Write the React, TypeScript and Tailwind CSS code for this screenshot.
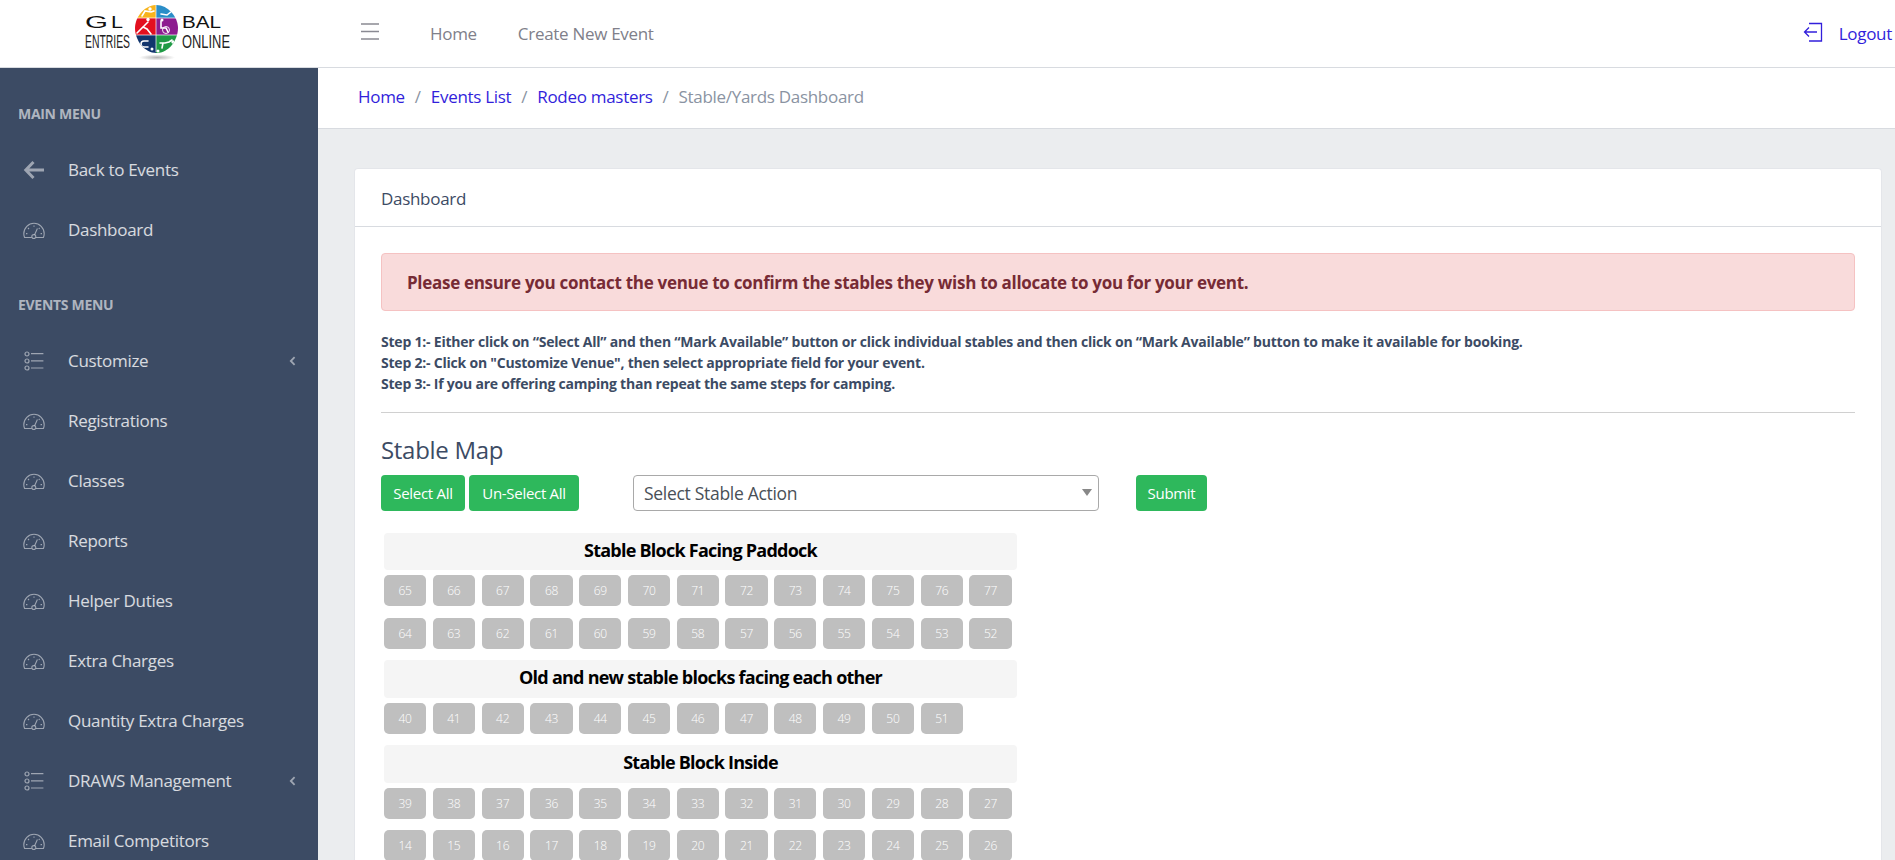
import React from "react";

const Gauge = () => (
  <svg width="22" height="17" viewBox="0 0 22 17" fill="none" stroke="currentColor" strokeWidth="1.1" className="shrink-0">
    <path d="M8.6 15.5H1.6C1 14 .8 13 .8 11.8 .8 6 5.4 1.2 11 1.2S21.2 6 21.2 11.8c0 1.2-.2 2.2-.8 3.7H13" />
    <circle cx="10.8" cy="14.6" r="2" />
    <path d="M11.6 12.8 14.4 6.6M11 3.4V4.8M5 6l1 1M3 11.6h1.4M17.6 11.6H19M16.6 6l-.8.8" />
  </svg>
);
const ListIcon = () => (
  <svg width="20" height="20" viewBox="0 0 20 20" fill="none" stroke="currentColor" strokeWidth="1.2" className="shrink-0">
    <circle cx="3" cy="3" r="2" />
    <circle cx="3" cy="10" r="2" />
    <circle cx="3" cy="17" r="2" />
    <path d="M7 2.6H19.4M7 9.8H19.4M7 17H19.4" />
  </svg>
);
const BackArrow = () => (
  <svg width="22" height="20" viewBox="0 0 22 20" fill="none" stroke="currentColor" strokeWidth="3" className="shrink-0">
    <path d="M21 10H3M10.5 2 2.8 10l7.7 8" />
  </svg>
);
const Chevron = () => (
  <svg width="7" height="10" viewBox="0 0 7 10" fill="none" stroke="currentColor" strokeWidth="1.8">
    <path d="M5.6 1.2 1.8 5l3.8 3.8" />
  </svg>
);

const Logo = () => (
  <svg width="155" height="67" viewBox="0 0 155 67" className="ml-[80px] shrink-0" style={{ fontFamily: '"Liberation Sans", sans-serif', letterSpacing: 0 }}>
    <defs>
      <clipPath id="globe">
        <path d="M49.5 5C38 6 29 17 29 28c0 12 9 25 21.5 25S72 40 72 28C72 17 62 4.500 49.500 5Z" />
      </clipPath>
      <radialGradient id="shadow">
        <stop offset="0" stopColor="#b5b5b5" />
        <stop offset="1" stopColor="#ffffff" />
      </radialGradient>
    </defs>
    <g transform="translate(26 0)">
      <ellipse cx="51" cy="57.500" rx="18" ry="3" fill="url(#shadow)" />
      <g clipPath="url(#globe)">
        <rect x="25" y="0" width="25" height="18" fill="#f7b41d" />
        <rect x="50" y="0" width="26" height="18" fill="#2b8ec8" />
        <rect x="25" y="18" width="25" height="17" fill="#e30f1f" />
        <rect x="50" y="18" width="26" height="17" fill="#8d1c8f" />
        <rect x="25" y="35" width="25" height="20" fill="#11356d" />
        <rect x="50" y="35" width="26" height="20" fill="#1f9a45" />
        <g fill="none" stroke="#fff" strokeWidth="1.6" strokeLinecap="round">
          <path d="M36 16l3-5 6 1 3-1" />
          <path d="M55 14l6 1 5-4" />
          <path d="M31 33l6-6 4 2 4 5M38 26l4-4" />
          <path d="M55 21v7h5l2 4" />
          <path d="M42 41h-4a3 3 0 0 0 0 6h4" />
          <path d="M54 43h5l4-1 3-2M57 43l-1 5" />
        </g>
        <g fill="#fff">
          <circle cx="44" cy="9" r="1.700" />
          <circle cx="66" cy="8" r="1.700" />
          <circle cx="42" cy="19.500" r="1.700" />
          <circle cx="56" cy="20" r="1.500" />
          <circle cx="67" cy="42" r="1.700" />
          <circle cx="46" cy="49" r="1.500" />
          <circle cx="52" cy="51" r="1.500" />
        </g>
        <circle cx="60" cy="30" r="3.500" fill="none" stroke="#fff" strokeWidth="0.9" />
      </g>
      <path d="M50 5v47M29 18h43M29 35h43" stroke="#fff" strokeWidth="0.7" />
    </g>
    <text x="5" y="28" fontSize="17" fill="#111" textLength="23" lengthAdjust="spacingAndGlyphs">G</text>
    <text x="31" y="28" fontSize="17" fill="#111" textLength="12" lengthAdjust="spacingAndGlyphs">L</text>
    <text x="5" y="48" fontSize="18" fill="#222" textLength="45" lengthAdjust="spacingAndGlyphs">ENTRIES</text>
    <text x="102" y="28" fontSize="17" fill="#111" textLength="39" lengthAdjust="spacingAndGlyphs">BAL</text>
    <text x="102" y="48" fontSize="18" fill="#222" textLength="48" lengthAdjust="spacingAndGlyphs">ONLINE</text>
  </svg>
);

const items: { label: string; icon: "gauge" | "list"; sub?: boolean }[] = [
  { label: "Customize", icon: "list", sub: true },
  { label: "Registrations", icon: "gauge" },
  { label: "Classes", icon: "gauge" },
  { label: "Reports", icon: "gauge" },
  { label: "Helper Duties", icon: "gauge" },
  { label: "Extra Charges", icon: "gauge" },
  { label: "Quantity Extra Charges", icon: "gauge" },
  { label: "DRAWS Management", icon: "list", sub: true },
  { label: "Email Competitors", icon: "gauge" },
];

const NavRow = ({ icon, label, sub }: { icon: React.ReactNode; label: string; sub?: boolean }) => (
  <div className="flex h-[60px] shrink-0 items-center">
    <div className="flex w-[68px] justify-center pl-[1px] pr-[2px] text-white/50">{icon}</div>
    <span className="text-white/80">{label}</span>
    {sub && (
      <span className="ml-auto mr-[22px] text-white/50">
        <Chevron />
      </span>
    )}
  </div>
);

const SectionTitle = ({ children, className }: { children: React.ReactNode; className: string }) => (
  <div className={`flex shrink-0 items-center pl-[18px] text-[14px] font-bold text-white/60 ${className}`}>{children}</div>
);

const Seat = ({ n }: { n: number }) => (
  <div className="flex h-[31px] w-[42.2px] items-center justify-center rounded-[5px] bg-[#bfbfbf] text-[12px] font-light text-white">{n}</div>
);

const SeatRow = ({ nums }: { nums: number[] }) => (
  <div className="flex gap-[6.6px]">
    {nums.map((n) => (
      <Seat key={n} n={n} />
    ))}
  </div>
);

const range = (a: number, b: number) => {
  const out: number[] = [];
  if (a <= b) for (let i = a; i <= b; i++) out.push(i);
  else for (let i = a; i >= b; i--) out.push(i);
  return out;
};

const BlockTitle = ({ children, className }: { children: React.ReactNode; className: string }) => (
  <div className={`flex w-[633px] items-center justify-center rounded-[4px] bg-[#f5f5f5] pb-[3px] text-[18px] font-bold tracking-[-0.75px] text-black ${className}`}>
    {children}
  </div>
);

const GreenBtn = ({ children, className }: { children: React.ReactNode; className: string }) => (
  <button className={`flex h-[36px] items-center justify-center rounded-[4px] bg-[#2eb85c] text-[15px] text-white ${className}`}>{children}</button>
);

export default function App() {
  return (
    <div className="flex h-screen flex-col overflow-hidden bg-[#ebedef] text-[17px] text-[#3c4b64]" style={{ fontFamily: '"Open Sans", "Noto Sans", sans-serif', letterSpacing: "-0.3px" }}>
      <header className="flex h-[68px] shrink-0 items-center border-b border-[#d8dbe0] bg-white">
        <div className="flex w-[318px] shrink-0">
          <Logo />
        </div>
        <svg width="20" height="18" viewBox="0 0 20 18" className="mb-[4px] ml-[42px] text-[#8a8a93]" stroke="currentColor" strokeWidth="1.4">
          <path d="M1 1h18M1 8.500h18M1 16h18" />
        </svg>
        <nav className="ml-[50px] flex gap-[41px] text-[#80808a]">
          <span>Home</span>
          <span>Create New Event</span>
        </nav>
        <div className="ml-auto flex items-center pr-[3px] text-[#321fdb]">
          <svg width="20" height="20" viewBox="0 0 20 20" fill="none" stroke="currentColor" strokeWidth="1.3" className="mb-[4px]">
            <path d="M6 1.500H18.500V19H6M14 10H1.500M6 5.500 1.500 10 6 14.500" />
          </svg>
          <span className="ml-[16px]">Logout</span>
        </div>
      </header>
      <div className="flex min-h-0 flex-1">
        <aside className="flex w-[318px] shrink-0 flex-col overflow-hidden bg-[#3c4b64]">
          <SectionTitle className="h-[72px] pt-[18px]">MAIN MENU</SectionTitle>
          <NavRow icon={<BackArrow />} label="Back to Events" />
          <NavRow icon={<Gauge />} label="Dashboard" />
          <SectionTitle className="h-[71px] pt-[18px]">EVENTS MENU</SectionTitle>
          {items.map((it) => (
            <NavRow key={it.label} icon={it.icon === "gauge" ? <Gauge /> : <ListIcon />} label={it.label} sub={it.sub} />
          ))}
        </aside>
        <main className="flex min-w-0 flex-1 flex-col">
          <div className="flex h-[61px] shrink-0 items-center gap-[10px] border-b border-[#d8dbe0] bg-white pl-[40px] pb-[2px]">
            <span className="text-[#321fdb]">Home</span>
            <span className="text-[#8a93a2]">/</span>
            <span className="text-[#321fdb]">Events List</span>
            <span className="text-[#8a93a2]">/</span>
            <span className="text-[#321fdb]">Rodeo masters</span>
            <span className="text-[#8a93a2]">/</span>
            <span className="text-[#8a93a2]">Stable/Yards Dashboard</span>
          </div>
          <div className="ml-[36px] mr-[13px] mt-[39px] flex flex-1 flex-col rounded-t-[4px] border-x border-t border-[#e4e6ea] bg-white">
            <div className="flex h-[58px] shrink-0 items-center border-b border-[#d8dbe0] pl-[26px] pt-[2px]">Dashboard</div>
            <div className="px-[26px] pt-[26px]">
              <div className="flex h-[58px] items-center rounded-[4px] border border-[#f5c2c2] bg-[#f9dbdb] pl-[25px] pt-[1px] text-[17px] font-bold text-[#772b35]">
                Please ensure you contact the venue to confirm the stables they wish to allocate to you for your event.
              </div>
              <div className="mt-[20px] text-[14px] font-bold leading-[21px] tracking-[-0.215px]">
                <div>Step 1:- Either click on “Select All” and then “Mark Available” button or click individual stables and then click on “Mark Available” button to make it available for booking.</div>
                <div>Step 2:- Click on "Customize Venue", then select appropriate field for your event.</div>
                <div>Step 3:- If you are offering camping than repeat the same steps for camping.</div>
              </div>
              <div className="mt-[18px] h-px bg-[#d0d0d0]" />
              <div className="mt-[19px] text-[24px] leading-[36px]">Stable Map</div>
              <div className="mt-[7px] flex items-center">
                <GreenBtn className="w-[84px]">Select All</GreenBtn>
                <GreenBtn className="ml-[4px] w-[110px]">Un-Select All</GreenBtn>
                <div className="relative ml-[54px] w-[466px]">
                  <select className="h-[36px] w-full appearance-none rounded-[4px] border border-[#a9a9a9] bg-white pl-[10px] text-[17.500px] text-[#495057]">
                    <option>Select Stable Action</option>
                  </select>
                  <span className="pointer-events-none absolute right-[7px] top-[14px] h-0 w-0 border-x-[5px] border-t-[7px] border-x-transparent border-t-[#888]" />
                </div>
                <GreenBtn className="ml-[37px] w-[71px]">Submit</GreenBtn>
              </div>
              <div className="ml-[3px] mt-[22px] flex flex-col">
                <BlockTitle className="h-[37px]">Stable Block Facing Paddock</BlockTitle>
                <div className="mt-[5px]"><SeatRow nums={range(65, 77)} /></div>
                <div className="mt-[12px]"><SeatRow nums={range(64, 52)} /></div>
                <div className="mt-[11px]"><BlockTitle className="h-[38px]">Old and new stable blocks facing each other</BlockTitle></div>
                <div className="mt-[5px]"><SeatRow nums={range(40, 51)} /></div>
                <div className="mt-[11px]"><BlockTitle className="h-[38px]">Stable Block Inside</BlockTitle></div>
                <div className="mt-[5px]"><SeatRow nums={range(39, 27)} /></div>
                <div className="mt-[11px]"><SeatRow nums={range(14, 26)} /></div>
              </div>
            </div>
          </div>
        </main>
      </div>
    </div>
  );
}
